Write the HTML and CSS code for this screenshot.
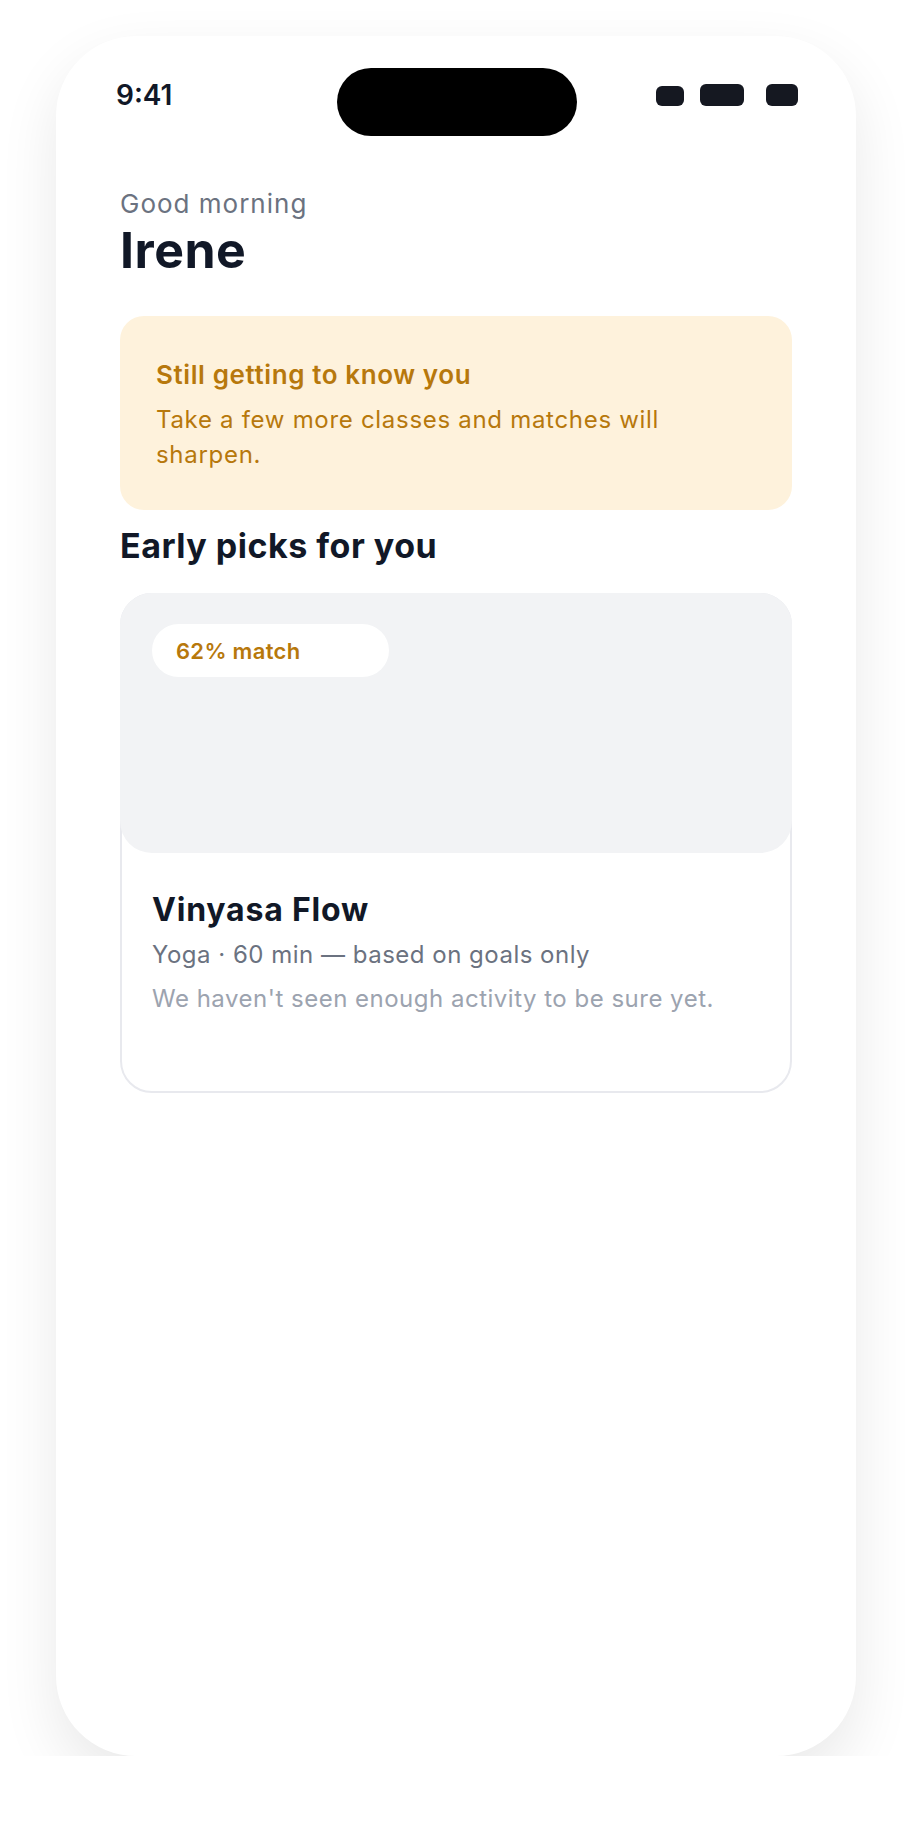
FILE: index.html
```html
<!DOCTYPE html>
<html lang="en">
<head>
    <meta charset="UTF-8">
    <meta name="viewport" content="width=device-width, initial-scale=1.0">
    <title>Home - Early picks</title>
    <link rel="stylesheet" href="styles.css">
</head>
<body>

    <div class="phone">
        <div class="status-bar">
            <span class="time">9:41</span>
            <div class="island"></div>
            <div class="status-icons">
                <span class="dot dot-signal"></span>
                <span class="dot dot-wifi"></span>
                <span class="dot dot-battery"></span>
            </div>
        </div>

        <main class="content">
            <p class="greeting">Good morning</p>
            <h1 class="name">Irene</h1>

            <div class="notice">
                <h2 class="notice-title">Still getting to know you</h2>
                <p class="notice-text">Take a few more classes and matches will sharpen.</p>
            </div>

            <h2 class="section-title">Early picks for you</h2>

            <div class="pick-card">
                <div class="pick-image">
                    <span class="match-badge">62% match</span>
                </div>
                <div class="pick-body">
                    <h3 class="pick-title">Vinyasa Flow</h3>
                    <p class="pick-meta">Yoga · 60 min — based on goals only</p>
                    <p class="pick-note">We haven't seen enough activity to be sure yet.</p>
                </div>
            </div>
        </main>
    </div>

</body>
</html>
```

FILE: styles.css
```css
* {
    box-sizing: border-box;
}

body {
    margin: 0;
    background-color: #fff;
    font-family: 'Inter', 'Noto Sans', sans-serif;
    color: #111827;
}

h1, h2, h3, p {
    margin: 0;
}

.phone {
    width: 800px;
    height: 1720px;
    margin: 36px auto 0;
    background-color: #fff;
    border-radius: 80px;
    box-shadow: 0 24px 60px rgba(0, 0, 0, 0.09);
    overflow: hidden;
}

/* status bar */
.status-bar {
    display: grid;
    grid-template-columns: 1fr 240px 1fr;
    align-items: center;
    padding: 32px 58px 0 60px;
}

.time {
    font-size: 28px;
    font-weight: 600;
    margin-bottom: 14px;
}

.island {
    height: 68px;
    background-color: #000;
    border-radius: 34px;
}

.status-icons {
    display: flex;
    justify-content: flex-end;
    align-items: flex-end;
    margin-bottom: 14px;
}

.dot {
    display: block;
    height: 22px;
    background-color: #151821;
    border-radius: 6px;
}

.dot-signal {
    width: 28px;
    height: 20px;
}

.dot-wifi {
    width: 44px;
    margin-left: 16px;
}

.dot-battery {
    width: 32px;
    margin-left: 22px;
}

/* content */
.content {
    padding: 50px 64px 0;
}

.greeting {
    font-size: 26px;
    line-height: 36px;
    letter-spacing: 1px;
    color: #6b7280;
}

.name {
    font-size: 50px;
    line-height: 56px;
    font-weight: 700;
    letter-spacing: 0.5px;
}

.notice {
    margin-top: 38px;
    padding: 42px 36px 38px;
    background-color: #fef2dc;
    border-radius: 24px;
    color: #b7780c;
}

.notice-title {
    font-size: 26px;
    line-height: 34px;
    font-weight: 600;
    letter-spacing: 0.6px;
}

.notice-text {
    margin-top: 10px;
    font-size: 24px;
    line-height: 35px;
    letter-spacing: 0.7px;
    padding-right: 30px;
}

.section-title {
    margin-top: 16px;
    font-size: 34px;
    line-height: 40px;
    font-weight: 700;
    letter-spacing: 0.5px;
}

.pick-card {
    margin-top: 27px;
    border: 2px solid #e8e9ee;
    border-radius: 32px;
}

.pick-image {
    height: 260px;
    margin: -2px -2px 0;
    padding: 31px 32px;
    background-color: #f2f3f5;
    border-radius: 32px;
}

.match-badge {
    display: flex;
    align-items: center;
    width: 237px;
    height: 53px;
    padding-left: 24px;
    background-color: #fff;
    border-radius: 27px;
    color: #b7780c;
    font-size: 22px;
    font-weight: 600;
    letter-spacing: 0.3px;
}

.pick-body {
    padding: 37px 30px 75px;
}

.pick-title {
    font-size: 32px;
    line-height: 40px;
    font-weight: 700;
    letter-spacing: 0.8px;
}

.pick-meta {
    margin-top: 8px;
    font-size: 24px;
    line-height: 34px;
    letter-spacing: 0.5px;
    color: #6b7280;
}

.pick-note {
    margin-top: 10px;
    font-size: 24px;
    line-height: 34px;
    letter-spacing: 0.5px;
    color: #9ca3af;
}
```
